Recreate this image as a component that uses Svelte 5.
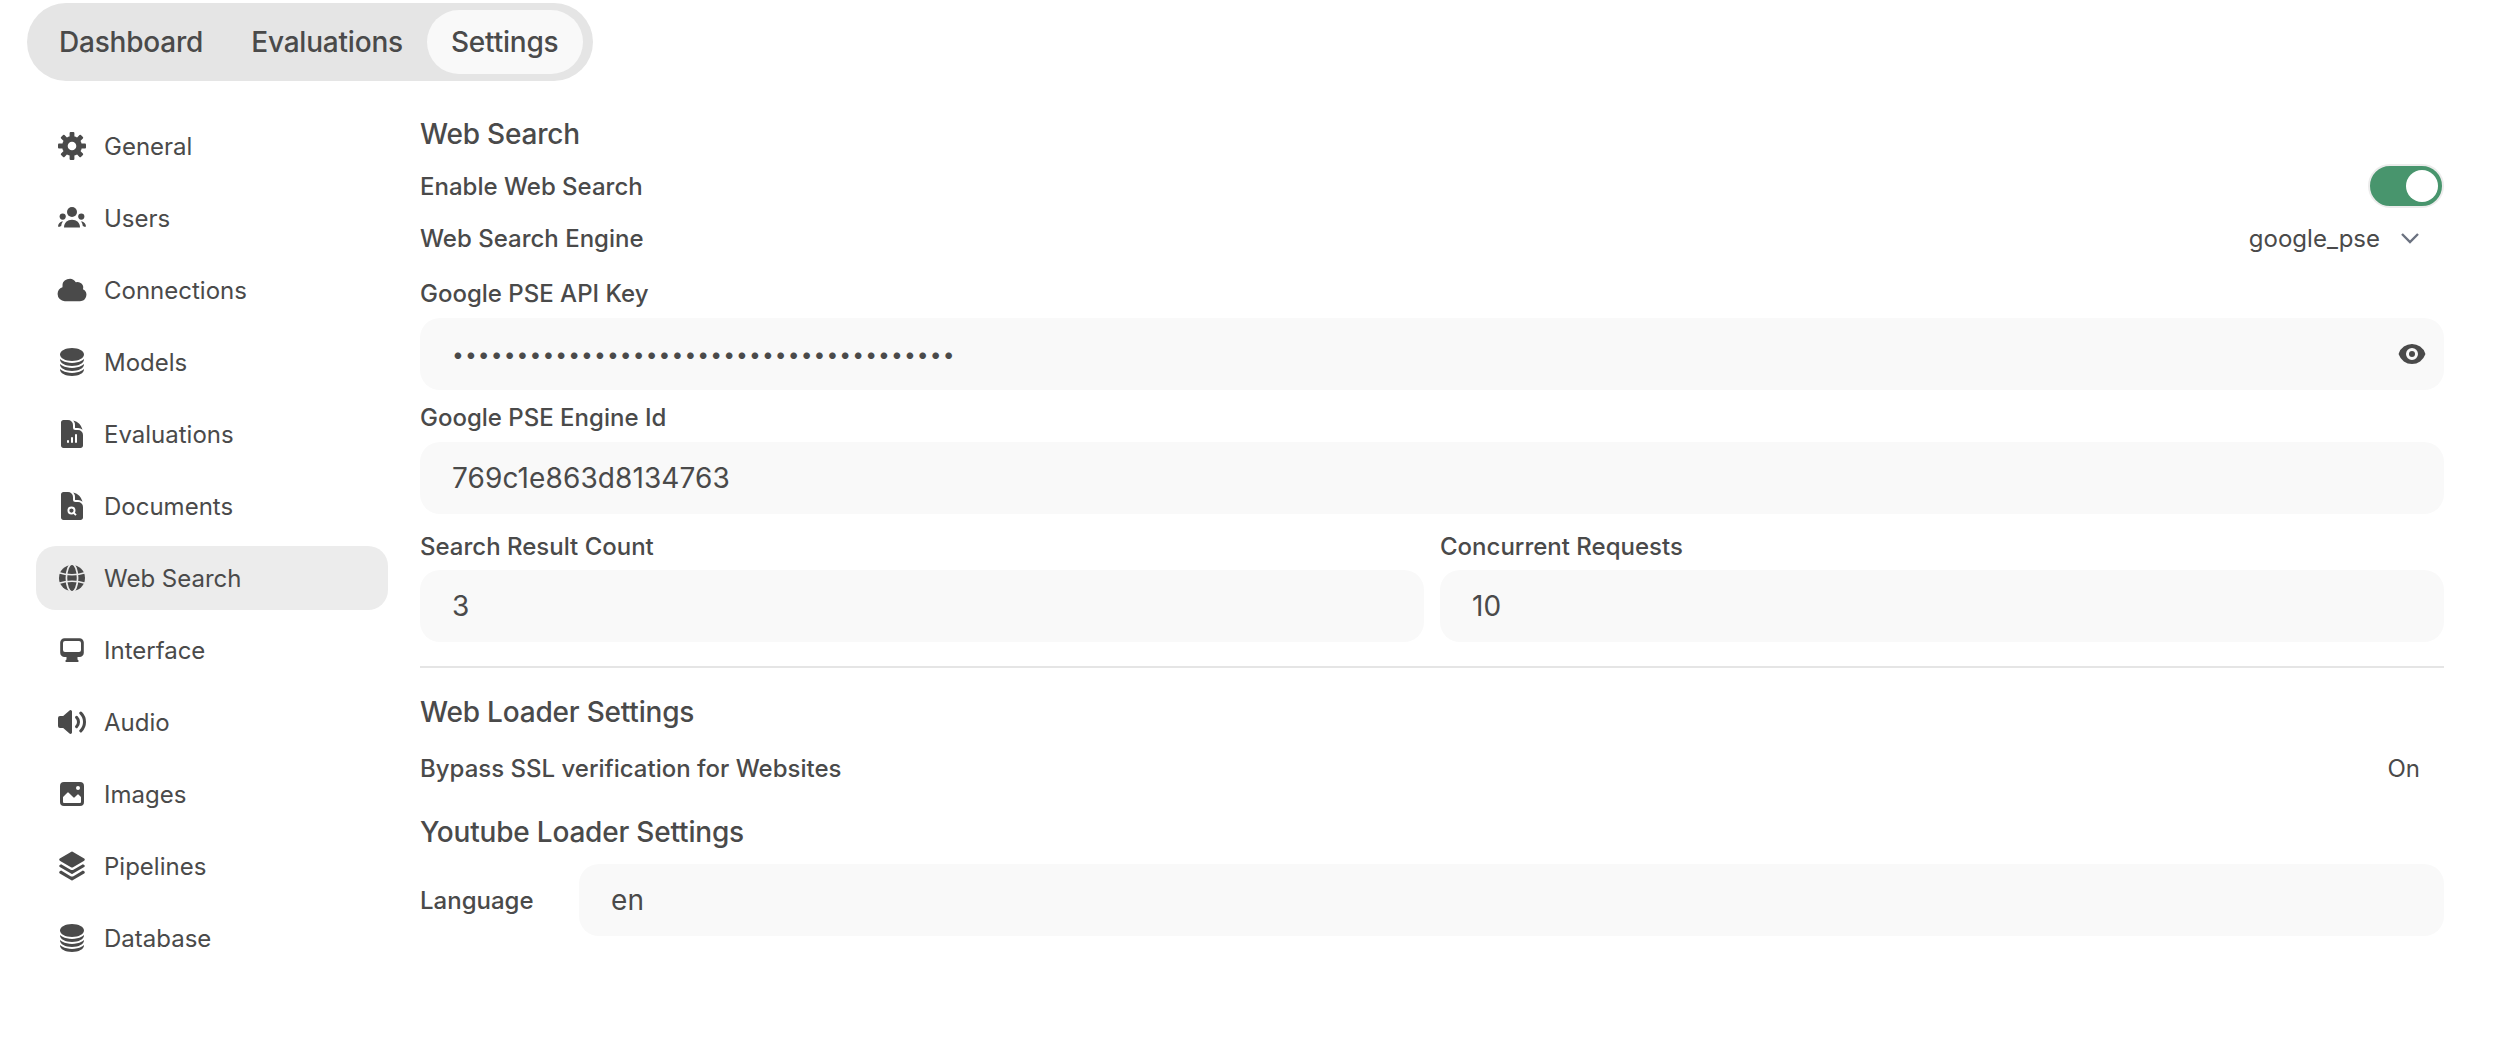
<script>
  const items = ['General', 'Users', 'Connections', 'Models', 'Evaluations', 'Documents', 'Web Search', 'Interface', 'Audio', 'Images', 'Pipelines', 'Database']
  const active = 'Web Search'
  const apiKey = '•'.repeat(39)
  const teeth = [0, 45, 90, 135, 180, 225, 270, 315]
</script>

{#snippet stack()}
  <svg viewBox="0 0 24 24"><path d="M21 6.375c0 2.692-4.03 4.875-9 4.875S3 9.067 3 6.375 7.03 1.5 12 1.5s9 2.183 9 4.875Z"/><path d="M12 12.75c2.685 0 5.19-.586 7.078-1.609a8.283 8.283 0 0 0 1.897-1.384c.016.121.025.244.025.368C21 12.817 16.97 15 12 15s-9-2.183-9-4.875c0-.124.009-.247.025-.368a8.285 8.285 0 0 0 1.897 1.384C6.809 12.164 9.315 12.75 12 12.75Z"/><path d="M12 16.5c2.685 0 5.19-.586 7.078-1.609a8.282 8.282 0 0 0 1.897-1.384c.016.121.025.244.025.368 0 2.692-4.03 4.875-9 4.875s-9-2.183-9-4.875c0-.124.009-.247.025-.368a8.284 8.284 0 0 0 1.897 1.384C6.809 15.914 9.315 16.5 12 16.5Z"/><path d="M12 20.25c2.685 0 5.19-.586 7.078-1.609a8.282 8.282 0 0 0 1.897-1.384c.016.121.025.244.025.368 0 2.692-4.03 4.875-9 4.875s-9-2.183-9-4.875c0-.124.009-.247.025-.368a8.284 8.284 0 0 0 1.897 1.384C6.809 19.664 9.315 20.25 12 20.25Z"/></svg>
{/snippet}

{#snippet icon(name)}
  {#if name === 'General'}
    <svg viewBox="0 0 32 32">
      {#each teeth as deg}
        <rect x="13.6" y="2" width="4.8" height="7" rx="1" transform={`rotate(${deg} 16 16)`} />
      {/each}
      <circle cx="16" cy="16" r="10" />
      <circle class="hole" cx="16" cy="16" r="4.3" />
    </svg>
  {:else if name === 'Users'}
    <svg viewBox="0 0 32 32">
      <circle cx="16" cy="10" r="5" />
      <circle cx="6.7" cy="14.6" r="3.1" />
      <circle cx="25.3" cy="14.6" r="3.1" />
      <path d="M8 25.5c0-5 3.4-7.8 8-7.8s8 2.8 8 7.8Z" />
      <path d="M2 24.2c.4-2.200 1.600-3.900 3.800-4.600h1.300c-1 1.100-1.600 2.300-1.900 4.300L2.900 25Z" />
      <path d="M30 24.200c-.4-2.200-1.600-3.900-3.800-4.600h-1.300c1 1.100 1.600 2.300 1.900 4.300l2.300 1.100Z" />
    </svg>
  {:else if name === 'Connections'}
    <svg viewBox="0 0 20 20"><path d="M1 12.5A4.5 4.5 0 0 0 5.5 17H15a4 4 0 0 0 1.866-7.539 3.504 3.504 0 0 0-4.504-4.272A4.5 4.5 0 0 0 4.06 8.235 4.502 4.502 0 0 0 1 12.5Z"/></svg>
  {:else if name === 'Models' || name === 'Database'}
    {@render stack()}
  {:else if name === 'Evaluations'}
    <svg viewBox="0 0 24 24"><path fill-rule="evenodd" d="M5.625 1.5c-1.036 0-1.875.84-1.875 1.875v17.25c0 1.035.84 1.875 1.875 1.875h12.75c1.035 0 1.875-.84 1.875-1.875V12.75A3.75 3.75 0 0 0 16.5 9h-1.875a1.875 1.875 0 0 1-1.875-1.875V5.25A3.75 3.75 0 0 0 9 1.5H5.625ZM9.75 17.25a.75.75 0 0 0-1.5 0V18a.75.75 0 0 0 1.5 0v-.75Zm2.25-3a.75.75 0 0 1 .75.75v3a.75.75 0 0 1-1.5 0v-3a.75.75 0 0 1 .75-.75Zm3.75-1.5a.75.75 0 0 0-1.5 0V18a.75.75 0 0 0 1.5 0v-5.25Z"/><path d="M14.25 5.25a5.23 5.23 0 0 0-1.279-3.434 9.768 9.768 0 0 1 6.963 6.963A5.23 5.23 0 0 0 16.5 7.5h-1.875a.375.375 0 0 1-.375-.375V5.25Z"/></svg>
  {:else if name === 'Documents'}
    <svg viewBox="0 0 24 24"><path d="M5.625 1.5c-1.036 0-1.875.84-1.875 1.875v17.25c0 1.035.84 1.875 1.875 1.875h12.75c1.035 0 1.875-.84 1.875-1.875V12.75A3.75 3.75 0 0 0 16.5 9h-1.875a1.875 1.875 0 0 1-1.875-1.875V5.25A3.75 3.75 0 0 0 9 1.5H5.625Z"/><path d="M14.25 5.25a5.23 5.23 0 0 0-1.279-3.434 9.768 9.768 0 0 1 6.963 6.963A5.23 5.23 0 0 0 16.5 7.5h-1.875a.375.375 0 0 1-.375-.375V5.25Z"/><circle class="cut" cx="11.6" cy="15.4" r="2.3"/><path class="cut" d="M13.3 17.1l1.7 1.7"/></svg>
  {:else if name === 'Web Search'}
    <svg viewBox="0 0 32 32">
      <circle cx="16" cy="16" r="13" />
      <ellipse class="cut" cx="16" cy="16" rx="5.6" ry="14" />
      <path class="cut" d="M2 10.500q14 4.500 28 0M2 21.500q14-4.500 28 0" />
    </svg>
  {:else if name === 'Interface'}
    <svg viewBox="0 0 32 32"><path fill-rule="evenodd" d="M8.500 4.300h15a4.300 4.300 0 0 1 4.300 4.300v10.100a4.300 4.300 0 0 1-4.300 4.300h-2v2.400l.8.900a1 1 0 0 1-.7 1.700H10.400a1 1 0 0 1-.7-1.700l.8-.9V23H8.500a4.300 4.300 0 0 1-4.300-4.300V8.600a4.300 4.300 0 0 1 4.300-4.300ZM9 6.900a2 2 0 0 0-2 2v7a2 2 0 0 0 2 2h14a2 2 0 0 0 2-2v-7a2 2 0 0 0-2-2Z"/></svg>
  {:else if name === 'Audio'}
    <svg viewBox="0 0 16 16"><path d="M7.557 2.066A.75.75 0 0 1 8 2.750v10.500a.75.75 0 0 1-1.248.56L3.590 11H2a1 1 0 0 1-1-1V6a1 1 0 0 1 1-1h1.590l3.162-2.810a.75.75 0 0 1 .805-.124ZM12.950 3.050a.75.75 0 1 0-1.060 1.060 5.500 5.500 0 0 1 0 7.780.75.75 0 1 0 1.060 1.060 7 7 0 0 0 0-9.900Z"/><path d="M10.828 5.172a.75.75 0 1 0-1.060 1.060 2.500 2.500 0 0 1 0 3.536.75.75 0 1 0 1.060 1.060 4 4 0 0 0 0-5.656Z"/></svg>
  {:else if name === 'Images'}
    <svg viewBox="0 0 16 16"><path fill-rule="evenodd" d="M2 4a2 2 0 0 1 2-2h8a2 2 0 0 1 2 2v8a2 2 0 0 1-2 2H4a2 2 0 0 1-2-2V4Zm10.500 5.707a.5.5 0 0 0-.146-.353l-1-1a.5.5 0 0 0-.708 0L9.354 9.646a.5.5 0 0 1-.708 0L6.354 7.354a.5.5 0 0 0-.708 0l-2 2a.5.5 0 0 0-.146.353V12a.5.5 0 0 0 .5.5h8a.5.5 0 0 0 .5-.5V9.707ZM12 5a1 1 0 1 1-2 0 1 1 0 0 1 2 0Z"/></svg>
  {:else if name === 'Pipelines'}
    <svg viewBox="0 0 20 20"><path d="M3.196 12.870l-.825.483a.75.75 0 0 0 0 1.294l7.250 4.250a.75.75 0 0 0 .758 0l7.250-4.250a.75.75 0 0 0 0-1.294l-.825-.484-5.666 3.322a2.250 2.250 0 0 1-2.276 0L3.196 12.870Z"/><path d="M3.196 8.870l-.825.483a.75.75 0 0 0 0 1.294l7.250 4.250a.75.75 0 0 0 .758 0l7.250-4.250a.75.75 0 0 0 0-1.294l-.825-.484-5.666 3.322a2.250 2.250 0 0 1-2.276 0L3.196 8.870Z"/><path d="M10.380 1.103a.75.75 0 0 0-.76 0l-7.250 4.250a.75.75 0 0 0 0 1.294l7.250 4.250a.75.75 0 0 0 .76 0l7.250-4.250a.75.75 0 0 0 0-1.294l-7.250-4.250Z"/></svg>
  {/if}
{/snippet}

<div class="page">
  <div class="tabs">
    <span class="tab">Dashboard</span>
    <span class="tab">Evaluations</span>
    <span class="tab on">Settings</span>
  </div>

  <div class="body">
    <nav class="side">
      {#each items as item}
        <div class="item" class:sel={item === active}>
          <span class="ico">{@render icon(item)}</span>
          <span>{item}</span>
        </div>
      {/each}
    </nav>

    <main class="content">
      <div class="title">Web Search</div>

      <div class="row r-enable">
        <span class="label">Enable Web Search</span>
        <span class="toggle"><span class="knob"></span></span>
      </div>
      <div class="row r-engine">
        <span class="label">Web Search Engine</span>
        <span class="select">
          google_pse
          <svg viewBox="0 0 20 20"><path d="M5 7.500l5 5 5-5" /></svg>
        </span>
      </div>

      <div class="label field-label key-label">Google PSE API Key</div>
      <div class="field">
        <span class="dots">{apiKey}</span>
        <svg class="eye" viewBox="0 0 16 16"><path d="M8 9.500a1.500 1.500 0 1 0 0-3 1.500 1.500 0 0 0 0 3Z"/><path fill-rule="evenodd" d="M1.380 8.280a.87.87 0 0 1 0-.566 7.003 7.003 0 0 1 13.238.006.87.87 0 0 1 0 .566A7.003 7.003 0 0 1 1.379 8.280ZM11 8a3 3 0 1 1-6 0 3 3 0 0 1 6 0Z"/></svg>
      </div>

      <div class="label field-label">Google PSE Engine Id</div>
      <div class="field">769c1e863d8134763</div>

      <div class="cols">
        <div>
          <div class="label field-label">Search Result Count</div>
          <div class="field">3</div>
        </div>
        <div>
          <div class="label field-label">Concurrent Requests</div>
          <div class="field">10</div>
        </div>
      </div>

      <hr />

      <div class="title">Web Loader Settings</div>
      <div class="row r-bypass">
        <span class="label">Bypass SSL verification for Websites</span>
        <span class="on-text">On</span>
      </div>

      <div class="title yt">Youtube Loader Settings</div>
      <div class="lang">
        <span class="label">Language</span>
        <div class="field grow">en</div>
      </div>
    </main>
  </div>
</div>

<style>
:global(body) {
  margin: 0;
  background: #fff;
}
.page {
  font-family: Inter, "Noto Sans", sans-serif;
  color: #4a4a4a;
  width: 2504px;
  height: 1038px;
  box-sizing: border-box;
  padding: 3px 60px 0 27px;
}
.tabs {
  display: inline-flex;
  align-items: center;
  box-sizing: border-box;
  height: 78px;
  padding: 0 10px 0 8px;
  background: #e5e5e5;
  border-radius: 39px;
  font-size: 28px;
  font-weight: 500;
  letter-spacing: -0.2px;
}
.tab {
  padding: 0 24px;
  height: 64px;
  line-height: 65px;
  border-radius: 32px;
}
.on {
  background: #f9f9f9;
}
.body {
  display: flex;
  margin-top: 33px;
}
.side {
  width: 352px;
  margin-left: 9px;
  margin-right: 32px;
  flex-shrink: 0;
  font-size: 24px;
  display: flex;
  flex-direction: column;
  gap: 8px;
}
.item {
  display: flex;
  align-items: center;
  height: 64px;
  padding-left: 20px;
  gap: 16px;
  border-radius: 20px;
}
.sel {
  background: #ececec;
}
.ico {
  width: 32px;
  height: 32px;
  flex-shrink: 0;
}
.ico :global(svg) {
  width: 32px;
  height: 32px;
  display: block;
  fill: #4a4a4a;
}
.ico :global(.hole) {
  fill: #fff;
}
.ico :global(.cut) {
  fill: none;
  stroke: #fff;
  stroke-width: 1.4;
}
.sel .ico :global(.cut) {
  stroke: #ececec;
  stroke-width: 1.7;
}
.content {
  flex: 1;
  min-width: 0;
  font-size: 24px;
}
.title {
  font-size: 28px;
  font-weight: 500;
  line-height: 40px;
  letter-spacing: -0.2px;
}
.label {
  font-weight: 500;
}
.row {
  display: flex;
  justify-content: space-between;
  align-items: center;
  height: 40px;
}
.r-enable {
  margin-top: 12px;
}
.r-engine {
  margin-top: 12px;
}
.toggle {
  display: flex;
  align-items: center;
  justify-content: flex-end;
  box-sizing: border-box;
  width: 76px;
  height: 44px;
  padding: 0 4px;
  background: #48956d;
  border: 2px solid #ececec;
  border-radius: 22px;
}
.knob {
  width: 32px;
  height: 32px;
  border-radius: 50%;
  background: #fff;
}
.select {
  display: flex;
  align-items: center;
  gap: 14px;
  padding-right: 18px;
}
.select svg {
  width: 32px;
  height: 32px;
  fill: none;
  stroke: #6b7280;
  stroke-width: 1.5;
}
.field-label {
  line-height: 40px;
  margin-bottom: 4px;
}
.key-label {
  margin-top: 16px;
}
.field {
  display: flex;
  align-items: center;
  justify-content: space-between;
  box-sizing: border-box;
  height: 72px;
  padding: 0 32px;
  background: #f9f9f9;
  border-radius: 20px;
  font-size: 28px;
  letter-spacing: 0.1px;
  margin-bottom: 8px;
}
.dots {
  font-size: 21px;
  letter-spacing: 1.1px;
}
.eye {
  width: 32px;
  height: 32px;
  fill: #4a4a4a;
  margin-right: -16px;
}
.cols {
  display: grid;
  grid-template-columns: 1fr 1fr;
  gap: 16px;
  margin-top: 13px;
}
.cols .field-label {
  margin-bottom: 3px;
}
.cols .field {
  margin-bottom: 0;
}
hr {
  border: 0;
  height: 2px;
  background: #e5e5e5;
  margin: 24px 0 24px;
}
.r-bypass {
  margin-top: 16px;
}
.on-text {
  padding-right: 24px;
}
.yt {
  margin-top: 24px;
}
.lang {
  display: flex;
  align-items: center;
  margin-top: 12px;
}
.lang .label {
  width: 159px;
  flex-shrink: 0;
}
.grow {
  flex: 1;
  margin-bottom: 0;
}
</style>
